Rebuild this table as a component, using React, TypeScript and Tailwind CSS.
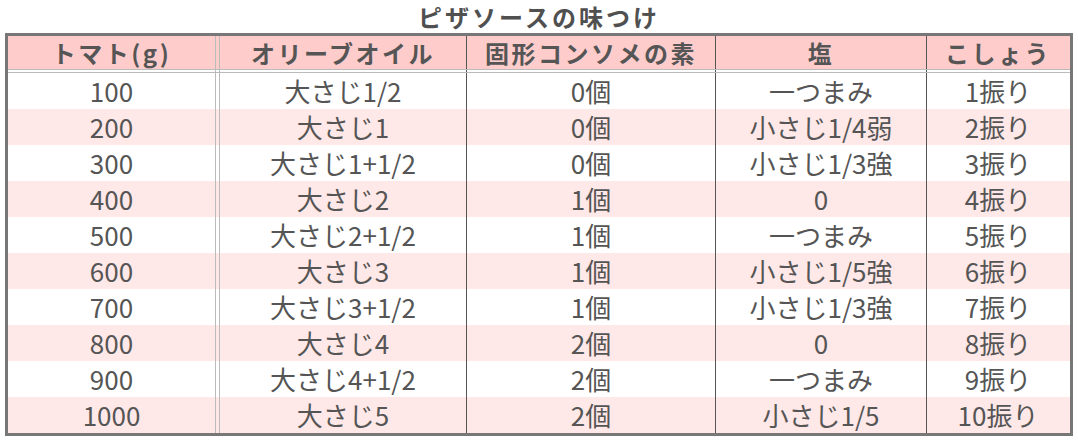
const rows = [
  ["100", "大さじ1/2", "0個", "一つまみ", "1振り"],
  ["200", "大さじ1", "0個", "小さじ1/4弱", "2振り"],
  ["300", "大さじ1+1/2", "0個", "小さじ1/3強", "3振り"],
  ["400", "大さじ2", "1個", "0", "4振り"],
  ["500", "大さじ2+1/2", "1個", "一つまみ", "5振り"],
  ["600", "大さじ3", "1個", "小さじ1/5強", "6振り"],
  ["700", "大さじ3+1/2", "1個", "小さじ1/3強", "7振り"],
  ["800", "大さじ4", "2個", "0", "8振り"],
  ["900", "大さじ4+1/2", "2個", "一つまみ", "9振り"],
  ["1000", "大さじ5", "2個", "小さじ1/5", "10振り"],
];

const headers = ["トマト(g)", "オリーブオイル", "固形コンソメの素", "塩", "こしょう"];

// column boxes: widths + the vertical rules
const cols = [
  "w-[208px] border-r border-r-[#bbbbbb]",
  "ml-[3px] w-[248px] border-l border-r border-l-[#bbbbbb] border-r-[#555555]",
  "w-[249px] border-r border-r-[#555555]",
  "w-[211px] border-r border-r-[#555555]",
  "w-[142px]",
];

export default function App() {
  return (
    <div
      className="w-[1078px] bg-white px-[5px] text-[#555555]"
      style={{ fontFamily: '"Noto Sans CJK JP", "Noto Sans", sans-serif' }}
    >
      <h2 className="h-[33px] text-center text-[24px] font-bold leading-[33px] tracking-[3px] text-[#505050]">
        ピザソースの味つけ
      </h2>

      <div className="border-[3px] border-[#777777]">
        <div className="flex h-[33px] bg-[#ffcccc]">
          {headers.map((h, i) => (
            <div
              key={h}
              className={`${cols[i]} flex items-center justify-center text-[24px] font-bold tracking-[2.5px]`}
            >
              {h}
            </div>
          ))}
        </div>

        <div className="flex h-[4px] border-y border-[#bbbbbb] bg-white">
          {headers.map((h, i) => (
            <div key={h} className={cols[i]} />
          ))}
        </div>

        {rows.map((row, r) => (
          <div
            key={row[0]}
            className={`flex h-[36px] ${r % 2 === 1 ? "bg-[#ffe8e8]" : "bg-white"}`}
          >
            {row.map((cell, i) => (
              <div
                key={i}
                className={`${cols[i]} flex items-center justify-center text-[26px] leading-none`}
              >
                {cell}
              </div>
            ))}
          </div>
        ))}
      </div>
    </div>
  );
}
